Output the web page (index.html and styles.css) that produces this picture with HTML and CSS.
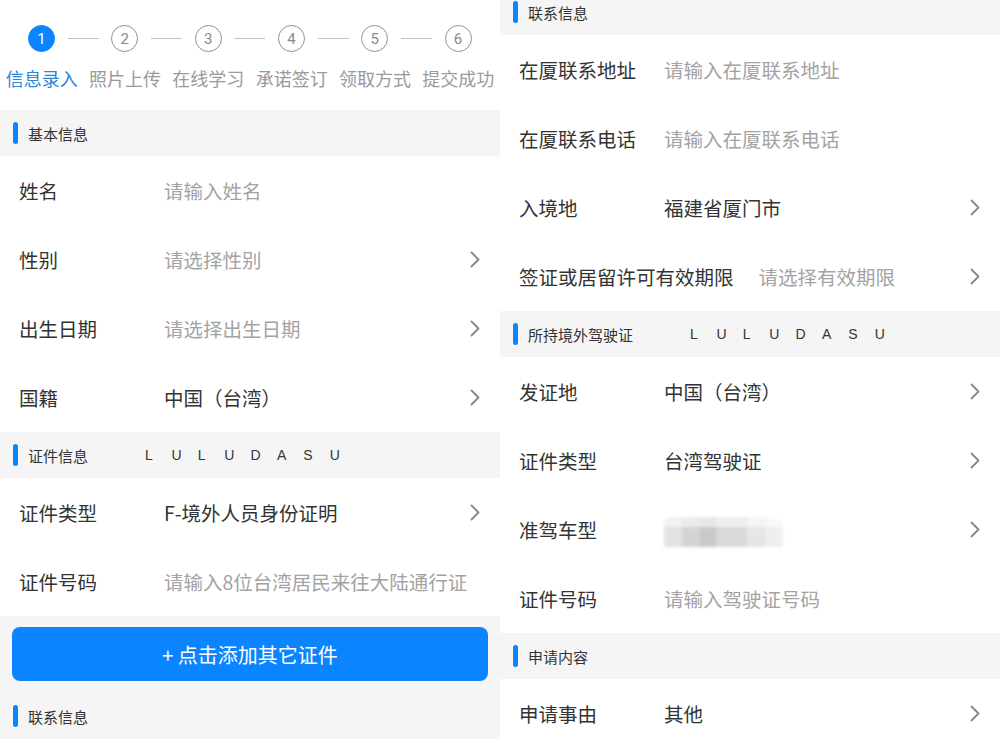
FILE: index.html
```html
<!DOCTYPE html>
<html lang="zh-CN">
<head>
<meta charset="utf-8">
<title>信息录入</title>
<link rel="stylesheet" href="styles.css">
</head>
<body>
<div class="screen">
  <div class="panel">
    <div class="steps">
      <div class="step-track">
        <span class="dot active">1</span><span class="line"></span>
        <span class="dot">2</span><span class="line"></span>
        <span class="dot">3</span><span class="line"></span>
        <span class="dot">4</span><span class="line"></span>
        <span class="dot">5</span><span class="line"></span>
        <span class="dot">6</span>
      </div>
      <div class="step-labels">
        <span class="active">信息录入</span>
        <span>照片上传</span>
        <span>在线学习</span>
        <span>承诺签订</span>
        <span>领取方式</span>
        <span>提交成功</span>
      </div>
    </div>

    <div class="section-head"><i class="bar"></i><span>基本信息</span></div>
    <div class="row"><span class="label">姓名</span><span class="value ph">请输入姓名</span></div>
    <div class="row"><span class="label">性别</span><span class="value ph">请选择性别</span><svg class="chev" viewBox="0 0 10 17"><path d="M1.5 1.5 L8.5 8.5 L1.5 15.5"/></svg></div>
    <div class="row"><span class="label">出生日期</span><span class="value ph">请选择出生日期</span><svg class="chev" viewBox="0 0 10 17"><path d="M1.5 1.5 L8.5 8.5 L1.5 15.5"/></svg></div>
    <div class="row"><span class="label">国籍</span><span class="value">中国（台湾）</span><svg class="chev" viewBox="0 0 10 17"><path d="M1.5 1.5 L8.5 8.5 L1.5 15.5"/></svg></div>

    <div class="section-head"><i class="bar"></i><span>证件信息</span>
      <span class="spaced"><b>L</b><b>U</b><b>L</b><b>U</b><b>D</b><b>A</b><b>S</b><b>U</b></span>
    </div>
    <div class="row"><span class="label">证件类型</span><span class="value">F-境外人员身份证明</span><svg class="chev" viewBox="0 0 10 17"><path d="M1.5 1.5 L8.5 8.5 L1.5 15.5"/></svg></div>
    <div class="row"><span class="label">证件号码</span><span class="value ph">请输入8位台湾居民来往大陆通行证</span></div>

    <div class="btn-area"><div class="add-btn">+ 点击添加其它证件</div></div>

    <div class="section-head"><i class="bar"></i><span>联系信息</span></div>
    <div class="row"></div>
  </div>

  <div class="panel panel-right">
    <div class="section-head"><i class="bar"></i><span>联系信息</span></div>
    <div class="row"><span class="label">在厦联系地址</span><span class="value ph">请输入在厦联系地址</span></div>
    <div class="row"><span class="label">在厦联系电话</span><span class="value ph">请输入在厦联系电话</span></div>
    <div class="row"><span class="label">入境地</span><span class="value">福建省厦门市</span><svg class="chev" viewBox="0 0 10 17"><path d="M1.5 1.5 L8.5 8.5 L1.5 15.5"/></svg></div>
    <div class="row"><span class="label">签证或居留许可有效期限</span><span class="value ph">请选择有效期限</span><svg class="chev" viewBox="0 0 10 17"><path d="M1.5 1.5 L8.5 8.5 L1.5 15.5"/></svg></div>

    <div class="section-head"><i class="bar"></i><span>所持境外驾驶证</span>
      <span class="spaced"><b>L</b><b>U</b><b>L</b><b>U</b><b>D</b><b>A</b><b>S</b><b>U</b></span>
    </div>
    <div class="row"><span class="label">发证地</span><span class="value">中国（台湾）</span><svg class="chev" viewBox="0 0 10 17"><path d="M1.5 1.5 L8.5 8.5 L1.5 15.5"/></svg></div>
    <div class="row"><span class="label">证件类型</span><span class="value">台湾驾驶证</span><svg class="chev" viewBox="0 0 10 17"><path d="M1.5 1.5 L8.5 8.5 L1.5 15.5"/></svg></div>
    <div class="row"><span class="label">准驾车型</span><span class="value"><span class="blurred"></span></span><svg class="chev" viewBox="0 0 10 17"><path d="M1.5 1.5 L8.5 8.5 L1.5 15.5"/></svg></div>
    <div class="row"><span class="label">证件号码</span><span class="value ph">请输入驾驶证号码</span></div>

    <div class="section-head"><i class="bar"></i><span>申请内容</span></div>
    <div class="row"><span class="label">申请事由</span><span class="value">其他</span><svg class="chev" viewBox="0 0 10 17"><path d="M1.5 1.5 L8.5 8.5 L1.5 15.5"/></svg></div>
  </div>
</div>
</body>
</html>
```

FILE: styles.css
```css
html, body {
  margin: 0;
  padding: 0;
  background: #ffffff;
}

body {
  font-family: "Noto Sans CJK SC", "Noto Sans", "Liberation Sans", sans-serif;
  color: #333333;
}

.screen {
  width: 1000px;
  height: 750px;
  display: flex;
  overflow: hidden;
}

.panel {
  width: 500px;
  flex: 0 0 500px;
  display: flex;
  flex-direction: column;
  background: #ffffff;
}

.panel > * {
  flex-shrink: 0;
}

.panel-right {
  margin-top: -11px;
}

/* Steps */
.steps {
  height: 110px;
  box-sizing: border-box;
  padding-top: 25px;
  background: #ffffff;
}

.step-track {
  display: flex;
  align-items: center;
  padding-left: 28px;
  height: 27px;
}

.dot {
  width: 27px;
  height: 27px;
  box-sizing: border-box;
  border: 1.5px solid #8f8f8f;
  border-radius: 50%;
  display: flex;
  align-items: center;
  justify-content: center;
  font-family: Roboto, "Liberation Sans", sans-serif;
  font-size: 15px;
  color: #8a8a8a;
  flex: 0 0 27px;
}

.dot.active {
  background: #0a84ff;
  border-color: #0a84ff;
  color: #ffffff;
}

.line {
  width: 31px;
  height: 1px;
  background: #bfc3c7;
  margin: 0 12.67px;
  flex: 0 0 31px;
}

.step-labels {
  display: grid;
  grid-template-columns: repeat(6, 1fr);
  margin-top: 16px;
  font-size: 18px;
  line-height: 20px;
  color: #9a9a9a;
  text-align: center;
}

.step-labels .active {
  color: #2b86d9;
}

/* Section headers */
.section-head {
  height: 46px;
  background: #f5f5f5;
  display: flex;
  align-items: center;
  padding-left: 13px;
  font-size: 15px;
  color: #333333;
}

.bar {
  width: 5px;
  height: 22px;
  border-radius: 3px;
  background: #0a84ff;
  margin-right: 10px;
}

.spaced {
  display: grid;
  grid-template-columns: repeat(8, 26.4px);
  margin-left: 57px;
  font-family: "Liberation Sans", Arial, sans-serif;
  font-size: 14px;
  color: #333333;
}

.spaced b {
  font-weight: normal;
}

/* Rows */
.row {
  height: 69px;
  display: flex;
  align-items: center;
  padding: 0 20px 0 19px;
  background: #ffffff;
  font-size: 19.5px;
}

.label {
  min-width: 120px;
  margin-right: 25px;
  color: #333333;
  white-space: nowrap;
}

.value {
  flex: 1;
  color: #333333;
  white-space: nowrap;
  display: flex;
  align-items: center;
}

.value.ph {
  color: #a3a3a3;
}

.chev {
  width: 10px;
  height: 17px;
  flex: 0 0 10px;
  fill: none;
  stroke: #7f8a95;
  stroke-width: 1.8;
  stroke-linecap: round;
  stroke-linejoin: round;
}

.blurred {
  display: block;
  width: 119px;
  height: 30px;
  margin-top: 4px;
  background:
    linear-gradient(to bottom, rgba(255,255,255,0.55) 0 35%, rgba(255,255,255,0) 35% 100%),
    linear-gradient(to right, #e2e2e2 0 15%, #d4d4d4 15% 30%, #c9c9c9 30% 44%, #d9d9d9 44% 70%, #e6e6e6 70% 86%, #efefef 86% 100%);
  filter: blur(1.5px);
  border-radius: 8px 12px 2px 2px;
}

/* Button */
.btn-area {
  background: #f5f5f5;
  padding: 11px 12px 12px;
}

.add-btn {
  height: 54px;
  border-radius: 8px;
  background: #0a84ff;
  color: #ffffff;
  font-size: 20px;
  display: flex;
  align-items: center;
  justify-content: center;
}
```
